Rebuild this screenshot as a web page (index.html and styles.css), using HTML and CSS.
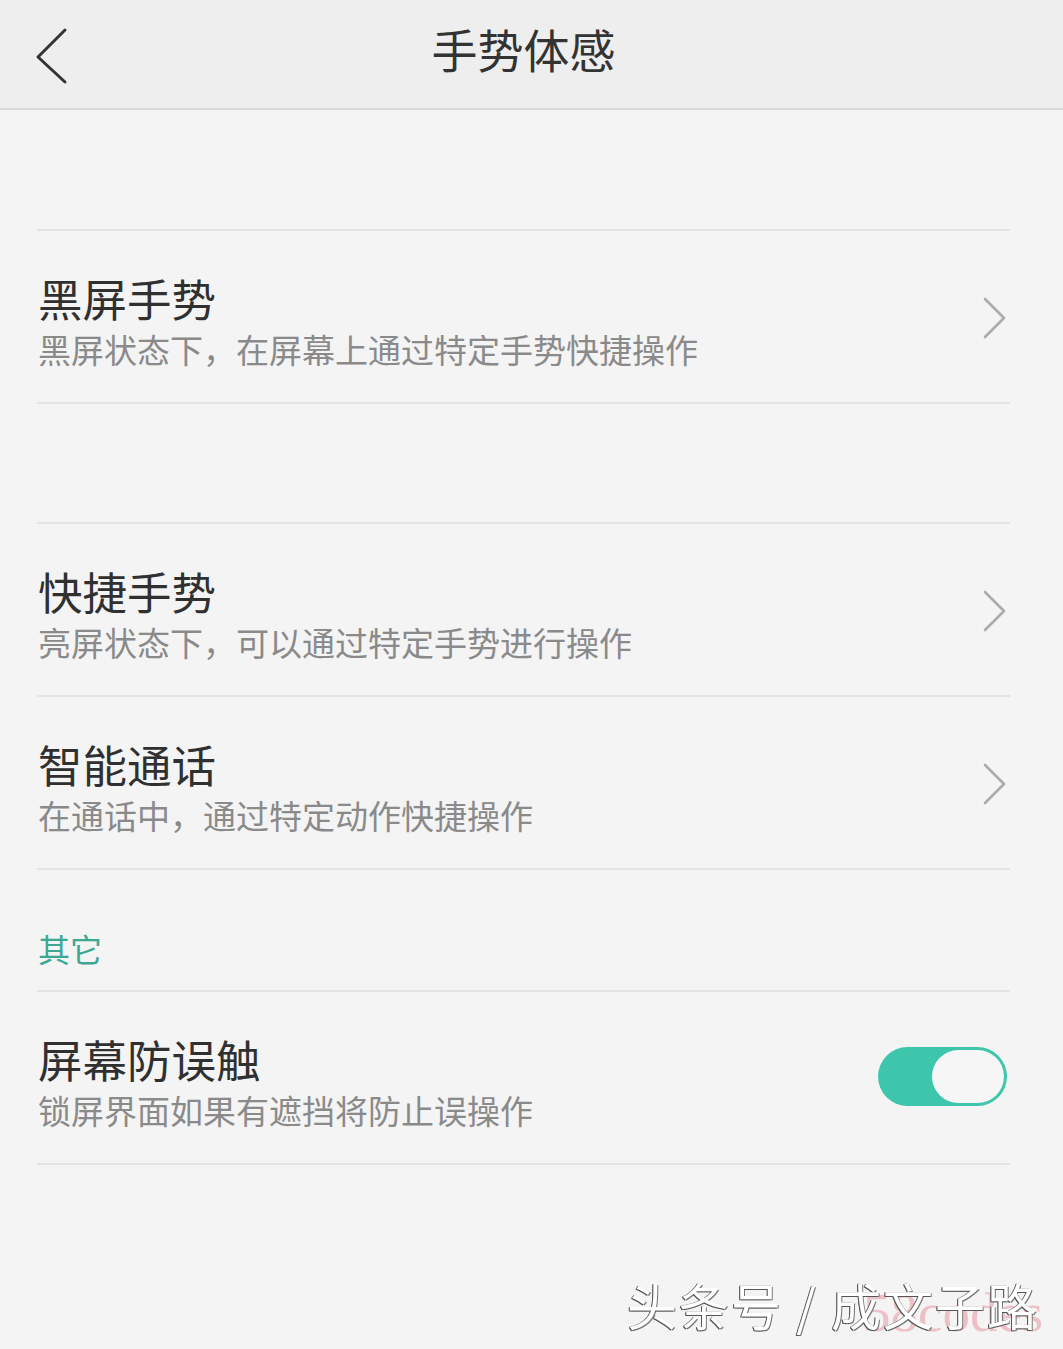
FILE: index.html
```html
<!DOCTYPE html>
<html lang="zh-CN">
<head>
<meta charset="utf-8">
<title>手势体感</title>
<link rel="stylesheet" href="styles.css">
</head>
<body>
<div class="page">
  <header class="topbar">
    <svg class="back" width="40" height="60" viewBox="0 0 40 60"><polyline points="27,11 0,38 27,63" transform="translate(11,-1)" fill="none" stroke="#333" stroke-width="3" stroke-linecap="round" stroke-linejoin="round"/></svg>
    <h1 class="title">手势体感</h1>
  </header>

  <div class="spacer-top"></div>

  <section class="group">
    <div class="row">
      <div class="text">
        <div class="row-title">黑屏手势</div>
        <div class="row-sub">黑屏状态下，在屏幕上通过特定手势快捷操作</div>
      </div>
      <svg class="chev" width="24" height="44" viewBox="0 0 24 44"><polyline points="3,3 22,22 3,41" fill="none" stroke="#ababab" stroke-width="2.6" stroke-linecap="round" stroke-linejoin="round"/></svg>
    </div>
  </section>

  <div class="spacer-mid"></div>

  <section class="group">
    <div class="row">
      <div class="text">
        <div class="row-title">快捷手势</div>
        <div class="row-sub">亮屏状态下，可以通过特定手势进行操作</div>
      </div>
      <svg class="chev" width="24" height="44" viewBox="0 0 24 44"><polyline points="3,3 22,22 3,41" fill="none" stroke="#ababab" stroke-width="2.6" stroke-linecap="round" stroke-linejoin="round"/></svg>
    </div>
    <div class="row">
      <div class="text">
        <div class="row-title">智能通话</div>
        <div class="row-sub">在通话中，通过特定动作快捷操作</div>
      </div>
      <svg class="chev" width="24" height="44" viewBox="0 0 24 44"><polyline points="3,3 22,22 3,41" fill="none" stroke="#ababab" stroke-width="2.6" stroke-linecap="round" stroke-linejoin="round"/></svg>
    </div>
  </section>

  <div class="section-label">其它</div>

  <section class="group">
    <div class="row">
      <div class="text">
        <div class="row-title">屏幕防误触</div>
        <div class="row-sub">锁屏界面如果有遮挡将防止误操作</div>
      </div>
      <div class="toggle"><div class="knob"></div></div>
    </div>
  </section>

  <div class="watermark">
    <span class="wm-codes">58codes</span>
    <span class="wm-text">头条号 / 成文子路</span>
  </div>
</div>
</body>
</html>
```
FILE: styles.css
```css
* { box-sizing: border-box; margin: 0; padding: 0; }
html, body { width: 1063px; height: 1349px; overflow: hidden; }
body {
  background: #f4f4f4;
  font-family: "Noto Sans CJK SC", "Noto Sans", sans-serif;
}
.page {
  position: relative;
  width: 1063px;
  height: 1349px;
  display: flex;
  flex-direction: column;
}
.topbar {
  position: relative;
  height: 110px;
  background: #eeeeee;
  border-bottom: 2px solid #d9d9d9;
  display: flex;
  align-items: center;
  justify-content: center;
}
.back {
  position: absolute;
  left: 27px;
  top: 20px;
  width: 40px;
  height: 60px;
  overflow: visible;
}
.title {
  font-weight: 400;
  font-size: 46px;
  line-height: 60px;
  color: #333;
  margin-top: -12px;
  margin-left: -16px;
}
.spacer-top { height: 119px; }
.spacer-mid { height: 118px; }
.group {
  margin: 0 53px 0 37px;
  border-top: 2px solid #e3e3e3;
}
.row {
  height: 173px;
  border-bottom: 2px solid #e3e3e3;
  display: flex;
  align-items: center;
  justify-content: space-between;
}
.text {
  display: flex;
  flex-direction: column;
  gap: 6px;
  padding-top: 8px;
}
.row-title {
  font-size: 44.5px;
  line-height: 50px;
  color: #303030;
  margin-left: 1px;
}
.row-sub {
  font-size: 33px;
  line-height: 40px;
  color: #8a8a8a;
  margin-left: 1px;
}
.chev {
  margin-right: 4px;
  margin-top: 2px;
}
.section-label {
  margin-left: 38px;
  height: 120px;
  display: flex;
  align-items: center;
  font-size: 32px;
  color: #3aa893;
  padding-top: 36px;
}
.toggle {
  width: 129px;
  height: 59px;
  border-radius: 30px;
  background: #3ec6ad;
  display: flex;
  align-items: center;
  justify-content: flex-end;
  padding-right: 3px;
  margin-right: 3px;
  margin-top: -2px;
}
.knob {
  width: 72px;
  height: 53px;
  border-radius: 27px;
  background: #f6f6f6;
}
.watermark {
  position: absolute;
  left: 600px;
  top: 1260px;
  width: 463px;
  height: 89px;
}
.wm-text {
  position: absolute;
  left: 27px;
  top: 14px;
  font-size: 50px;
  line-height: 60px;
  letter-spacing: 2px;
  color: #ffffff;
  white-space: nowrap;
  text-shadow: -1px 1px 0 #555, 1px 1px 0 #777, -1px 0 0 #666;
}
.wm-codes {
  position: absolute;
  left: 263px;
  top: 22px;
  font-family: "Liberation Serif", serif;
  font-size: 55px;
  line-height: 62px;
  color: rgba(232, 150, 160, 0.55);
  white-space: nowrap;
}
```
